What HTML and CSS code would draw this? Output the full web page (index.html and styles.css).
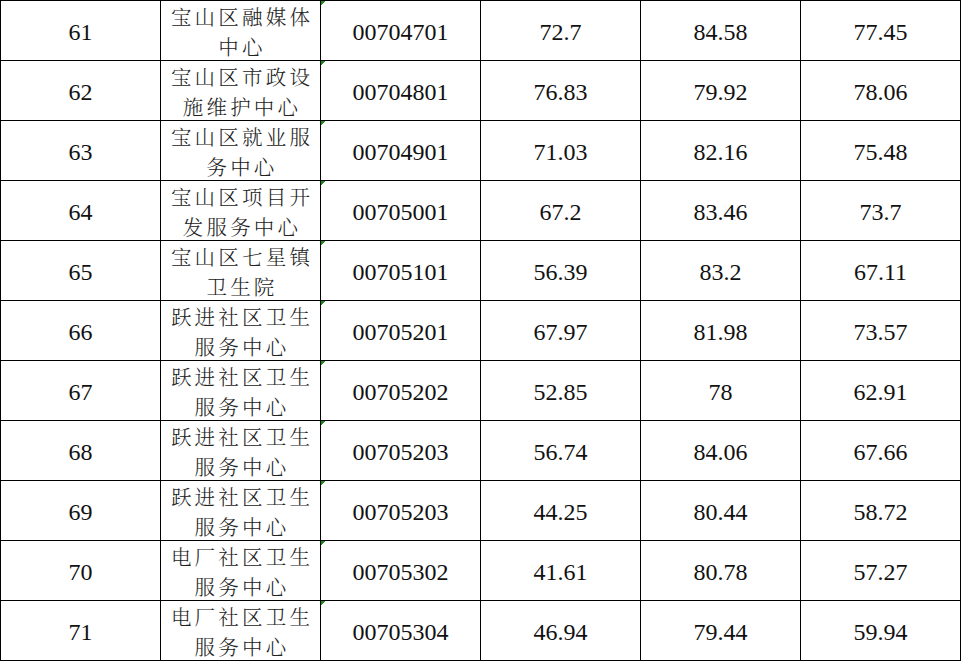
FILE: index.html
```html
<!DOCTYPE html>
<html lang="zh">
<head>
<meta charset="utf-8">
<link rel="stylesheet" href="styles.css">
</head>
<body>
<div class="sheet">
  <div class="c">61</div><div class="c name">宝山区融媒体<br>中心</div><div class="c code">00704701</div><div class="c">72.7</div><div class="c">84.58</div><div class="c">77.45</div>
  <div class="c">62</div><div class="c name">宝山区市政设<br>施维护中心</div><div class="c code">00704801</div><div class="c">76.83</div><div class="c">79.92</div><div class="c">78.06</div>
  <div class="c">63</div><div class="c name">宝山区就业服<br>务中心</div><div class="c code">00704901</div><div class="c">71.03</div><div class="c">82.16</div><div class="c">75.48</div>
  <div class="c">64</div><div class="c name">宝山区项目开<br>发服务中心</div><div class="c code">00705001</div><div class="c">67.2</div><div class="c">83.46</div><div class="c">73.7</div>
  <div class="c">65</div><div class="c name">宝山区七星镇<br>卫生院</div><div class="c code">00705101</div><div class="c">56.39</div><div class="c">83.2</div><div class="c">67.11</div>
  <div class="c">66</div><div class="c name">跃进社区卫生<br>服务中心</div><div class="c code">00705201</div><div class="c">67.97</div><div class="c">81.98</div><div class="c">73.57</div>
  <div class="c">67</div><div class="c name">跃进社区卫生<br>服务中心</div><div class="c code">00705202</div><div class="c">52.85</div><div class="c">78</div><div class="c">62.91</div>
  <div class="c">68</div><div class="c name">跃进社区卫生<br>服务中心</div><div class="c code">00705203</div><div class="c">56.74</div><div class="c">84.06</div><div class="c">67.66</div>
  <div class="c">69</div><div class="c name">跃进社区卫生<br>服务中心</div><div class="c code">00705203</div><div class="c">44.25</div><div class="c">80.44</div><div class="c">58.72</div>
  <div class="c">70</div><div class="c name">电厂社区卫生<br>服务中心</div><div class="c code">00705302</div><div class="c">41.61</div><div class="c">80.78</div><div class="c">57.27</div>
  <div class="c">71</div><div class="c name">电厂社区卫生<br>服务中心</div><div class="c code">00705304</div><div class="c">46.94</div><div class="c">79.44</div><div class="c">59.94</div>
</div>
</body>
</html>
```

FILE: styles.css
```css
html, body {
  margin: 0;
  padding: 0;
  background: #ffffff;
}
.sheet {
  display: grid;
  grid-template-columns: repeat(6, 159px);
  grid-auto-rows: 59px;
  gap: 1px;
  padding: 1px;
  background: #000000;
  width: max-content;
  font-family: "Liberation Serif", "Noto Serif CJK SC", "Noto Sans CJK SC", serif;
  font-size: 24px;
  color: #111111;
}
.c {
  background: #ffffff;
  display: flex;
  align-items: center;
  justify-content: center;
  text-align: center;
  padding-top: 4px;
  box-sizing: border-box;
  overflow: visible;
}
.name {
  font-family: "Noto Serif CJK SC", "Noto Sans CJK SC", serif;
  font-size: 20.5px;
  font-weight: 300;
  line-height: 30px;
  padding-top: 1px;
  padding-left: 3px;
  letter-spacing: 3.2px;
  color: #222222;
}
.code {
  background: linear-gradient(135deg, #1f8a1f 0, #1f8a1f 3.5px, #ffffff 3.5px) no-repeat;
  background-size: 8px 8px;
  background-color: #ffffff;
}
```
